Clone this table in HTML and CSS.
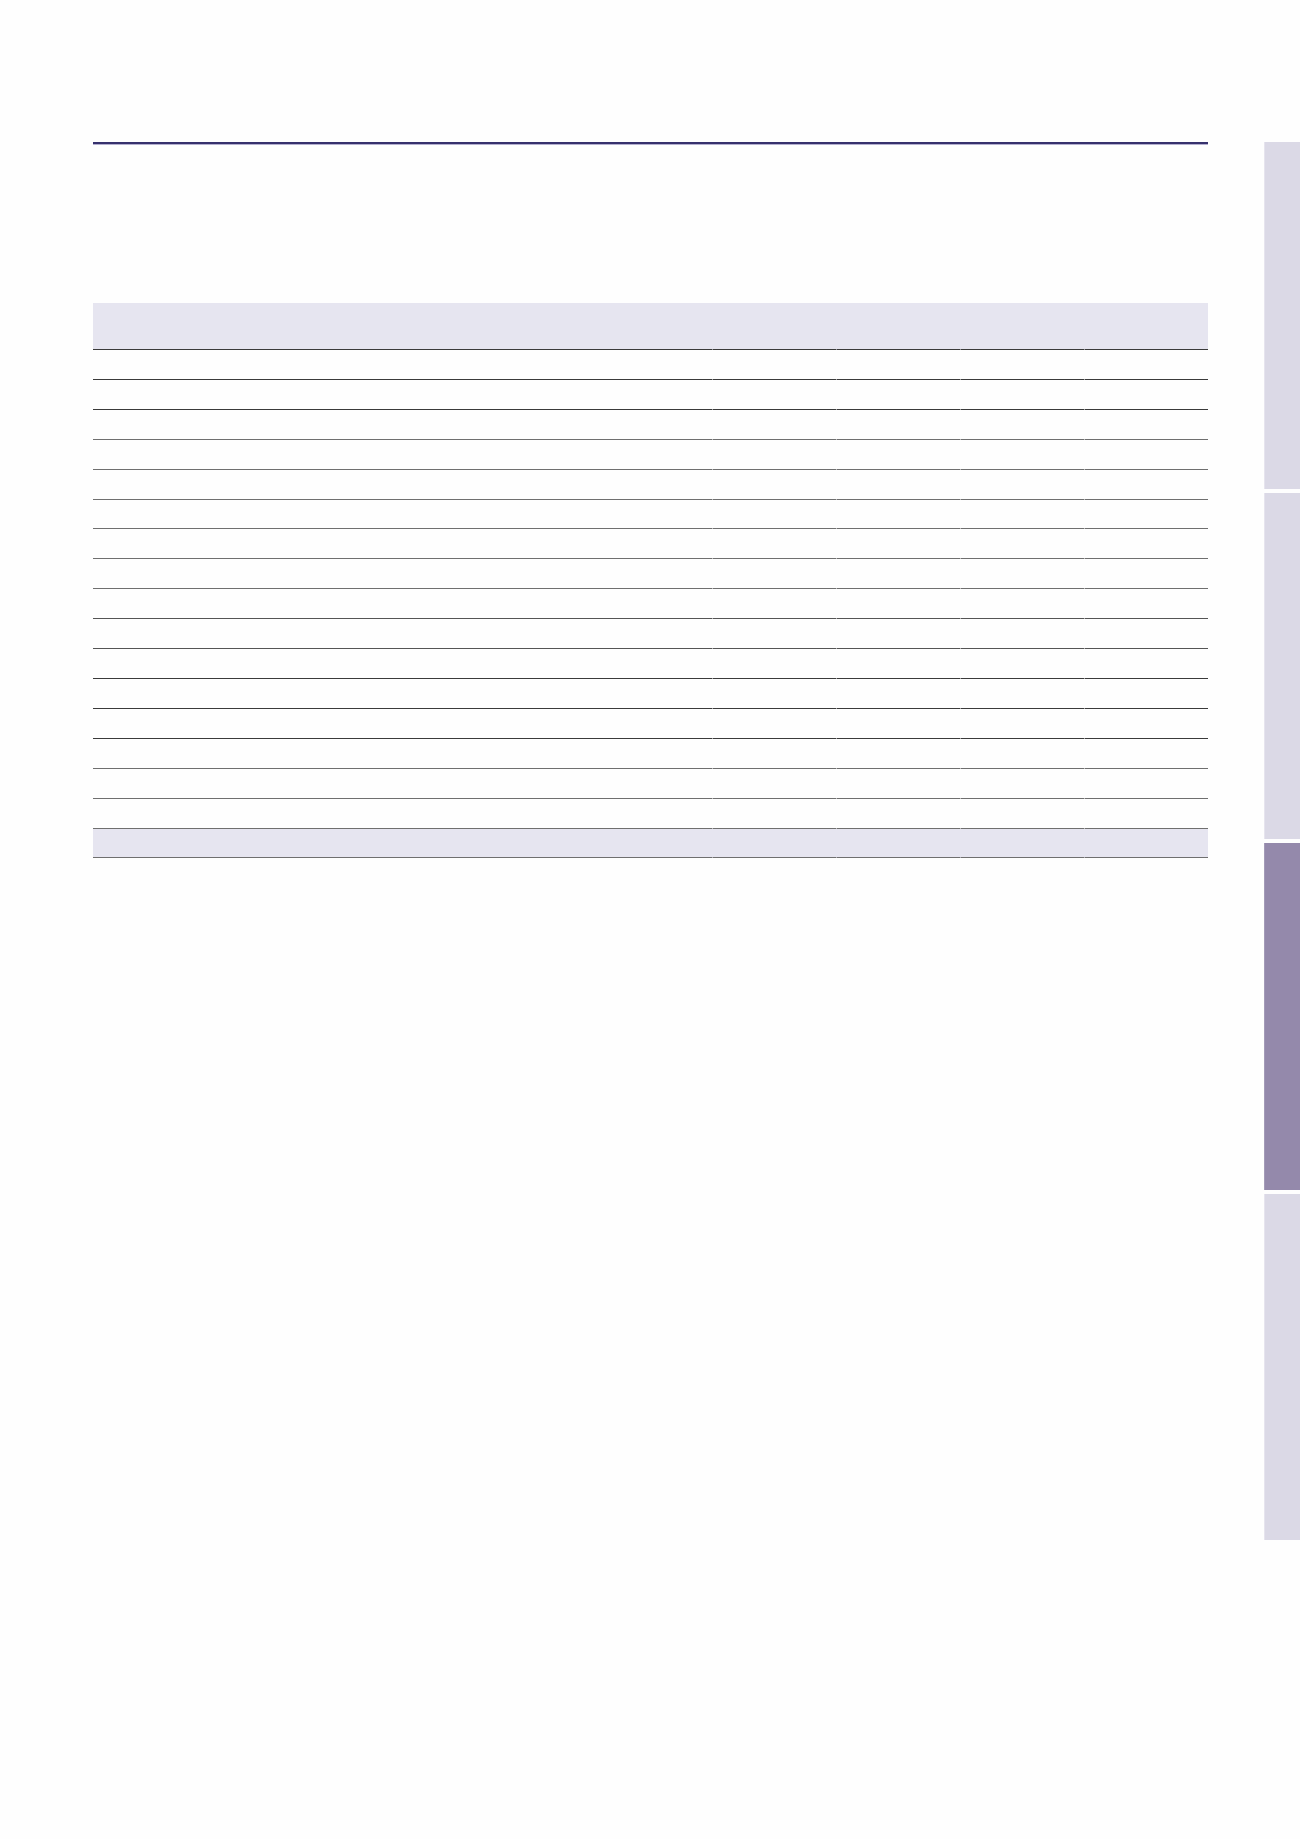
FILE: index.html
```html
<!DOCTYPE html>
<html lang="en">
<head>
<meta charset="utf-8">
<title>Table page</title>
<link rel="stylesheet" href="styles.css">
</head>
<body>
<div class="page">
  <main class="content">
    <div class="rule"></div>
    <div class="table">
      <div class="row head"><div></div><div></div><div></div><div></div><div></div></div>
      <div class="row"><div></div><div></div><div></div><div></div><div></div></div>
      <div class="row"><div></div><div></div><div></div><div></div><div></div></div>
      <div class="row soft"><div></div><div></div><div></div><div></div><div></div></div>
      <div class="row soft"><div></div><div></div><div></div><div></div><div></div></div>
      <div class="row soft"><div></div><div></div><div></div><div></div><div></div></div>
      <div class="row soft"><div></div><div></div><div></div><div></div><div></div></div>
      <div class="row soft"><div></div><div></div><div></div><div></div><div></div></div>
      <div class="row soft"><div></div><div></div><div></div><div></div><div></div></div>
      <div class="row mid"><div></div><div></div><div></div><div></div><div></div></div>
      <div class="row mid"><div></div><div></div><div></div><div></div><div></div></div>
      <div class="row"><div></div><div></div><div></div><div></div><div></div></div>
      <div class="row"><div></div><div></div><div></div><div></div><div></div></div>
      <div class="row"><div></div><div></div><div></div><div></div><div></div></div>
      <div class="row soft"><div></div><div></div><div></div><div></div><div></div></div>
      <div class="row soft"><div></div><div></div><div></div><div></div><div></div></div>
      <div class="row soft"><div></div><div></div><div></div><div></div><div></div></div>
      <div class="row total soft"><div></div><div></div><div></div><div></div><div></div></div>
    </div>
  </main>
  <nav class="tabs">
    <div class="tab"></div>
    <div class="tab"></div>
    <div class="tab active"></div>
    <div class="tab"></div>
  </nav>
</div>
</body>
</html>
```
FILE: styles.css
```css
html, body {
  margin: 0;
  padding: 0;
  background: #fefefe;
  font-family: "Liberation Sans", Arial, sans-serif;
}

.page {
  display: flex;
  align-items: flex-start;
  padding: 142px 0 0 93px;
  min-height: 1839px;
  box-sizing: border-box;
}

.content {
  width: 1115px;
  flex: none;
}

.rule {
  height: 2px;
  background: #36316d;
  box-shadow: 0 1px 0 #b3afcf;
}

.table {
  margin-top: 159px;
}

.row {
  display: grid;
  grid-template-columns: 619px 124px 124px 124px 124px;
  height: 29.92px;
}

.row > div {
  box-sizing: border-box;
  border-bottom: 1px solid #3a3a3a;
}

.row > div + div {
  border-left: 1px solid transparent;
}

.row.soft > div {
  border-bottom-color: #6f6f6f;
}

.row.mid > div {
  border-bottom-color: #555555;
}

.row.head {
  height: 47px;
  background: #e6e5f0;
}

.row.head > div {
  border-bottom-color: #3a3a3a;
}

.row.total {
  background: #e6e5f0;
}

.tabs {
  margin-left: auto;
  width: 36.5px;
  display: flex;
  flex-direction: column;
  gap: 4px;
}

.tab {
  height: 346.5px;
  background: #dbd9e6;
  border-left: 1px solid #e6e4ee;
  box-sizing: border-box;
}

.tab.active {
  background: #9489ab;
  border-left-color: #a49bb8;
}
```
